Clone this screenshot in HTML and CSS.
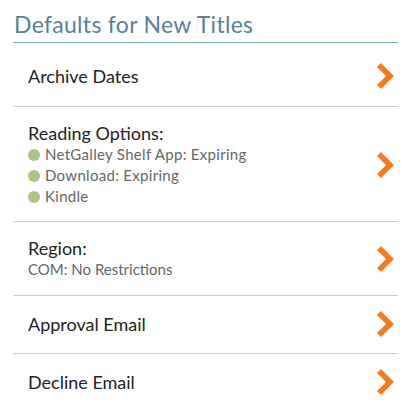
FILE: index.html
```html
<!DOCTYPE html>
<html>
<head>
<meta charset="utf-8">
<link rel="stylesheet" href="styles.css">
</head>
<body>
<div class="panel">
  <h2 class="panel-title">Defaults for New Titles</h2>
  <div class="row row-first">
    <div class="row-body"><div class="row-label">Archive Dates</div></div>
    <svg class="chev" viewBox="0 0 18 26"><path d="M0 4 L4 0 L17 13 L4 26 L0 22 L9 13 Z"/></svg>
  </div>
  <div class="row row-options">
    <div class="row-body">
      <div class="row-label">Reading Options:</div>
      <div class="opt"><span class="dot"></span>NetGalley Shelf App: Expiring</div>
      <div class="opt"><span class="dot"></span>Download: Expiring</div>
      <div class="opt"><span class="dot"></span>Kindle</div>
    </div>
    <svg class="chev" viewBox="0 0 18 26"><path d="M0 4 L4 0 L17 13 L4 26 L0 22 L9 13 Z"/></svg>
  </div>
  <div class="row">
    <div class="row-body">
      <div class="row-label">Region:</div>
      <div class="sub">COM: No Restrictions</div>
    </div>
    <svg class="chev" viewBox="0 0 18 26"><path d="M0 4 L4 0 L17 13 L4 26 L0 22 L9 13 Z"/></svg>
  </div>
  <div class="row row-single">
    <div class="row-body"><div class="row-label">Approval Email</div></div>
    <svg class="chev" viewBox="0 0 18 26"><path d="M0 4 L4 0 L17 13 L4 26 L0 22 L9 13 Z"/></svg>
  </div>
  <div class="row row-single row-last">
    <div class="row-body"><div class="row-label">Decline Email</div></div>
    <svg class="chev" viewBox="0 0 18 26"><path d="M0 4 L4 0 L17 13 L4 26 L0 22 L9 13 Z"/></svg>
  </div>
</div>
</body>
</html>
```
FILE: styles.css
```css
html, body {
  margin: 0;
  padding: 0;
  background: #fff;
}
body {
  font-family: Lato, "Open Sans", sans-serif;
}
.panel {
  padding: 0 10px 0 13px;
}
.panel-title {
  margin: 0;
  padding: 11px 0 0 1px;
  height: 31px;
  font-size: 23px;
  line-height: 26px;
  font-weight: 400;
  letter-spacing: 0.3px;
  color: #5a7f9a;
  border-bottom: 1px solid #78a6cf;
}
.row {
  display: flex;
  align-items: center;
  justify-content: space-between;
  padding: 15px 3px 15px 15px;
  border-bottom: 1px solid #cccccc;
}
.row-first {
  padding-top: 22px;
  padding-bottom: 19px;
}
.row-options {
  padding-bottom: 14px;
}
.row-single {
  padding-top: 17px;
  padding-bottom: 18px;
}
.row-last {
  border-bottom: none;
}
.row-label {
  font-size: 18px;
  line-height: 22px;
  color: #222;
}
.opt, .sub {
  font-size: 15px;
  line-height: 21px;
  color: #666;
}
.opt {
  display: flex;
  align-items: center;
  letter-spacing: 0.3px;
}
.dot {
  width: 12px;
  height: 12px;
  border-radius: 50%;
  background: #a6c784;
  margin-right: 5px;
}
.chev {
  width: 18px;
  height: 26px;
  margin: -6px 0;
  fill: #f47b20;
  flex: none;
}
```
